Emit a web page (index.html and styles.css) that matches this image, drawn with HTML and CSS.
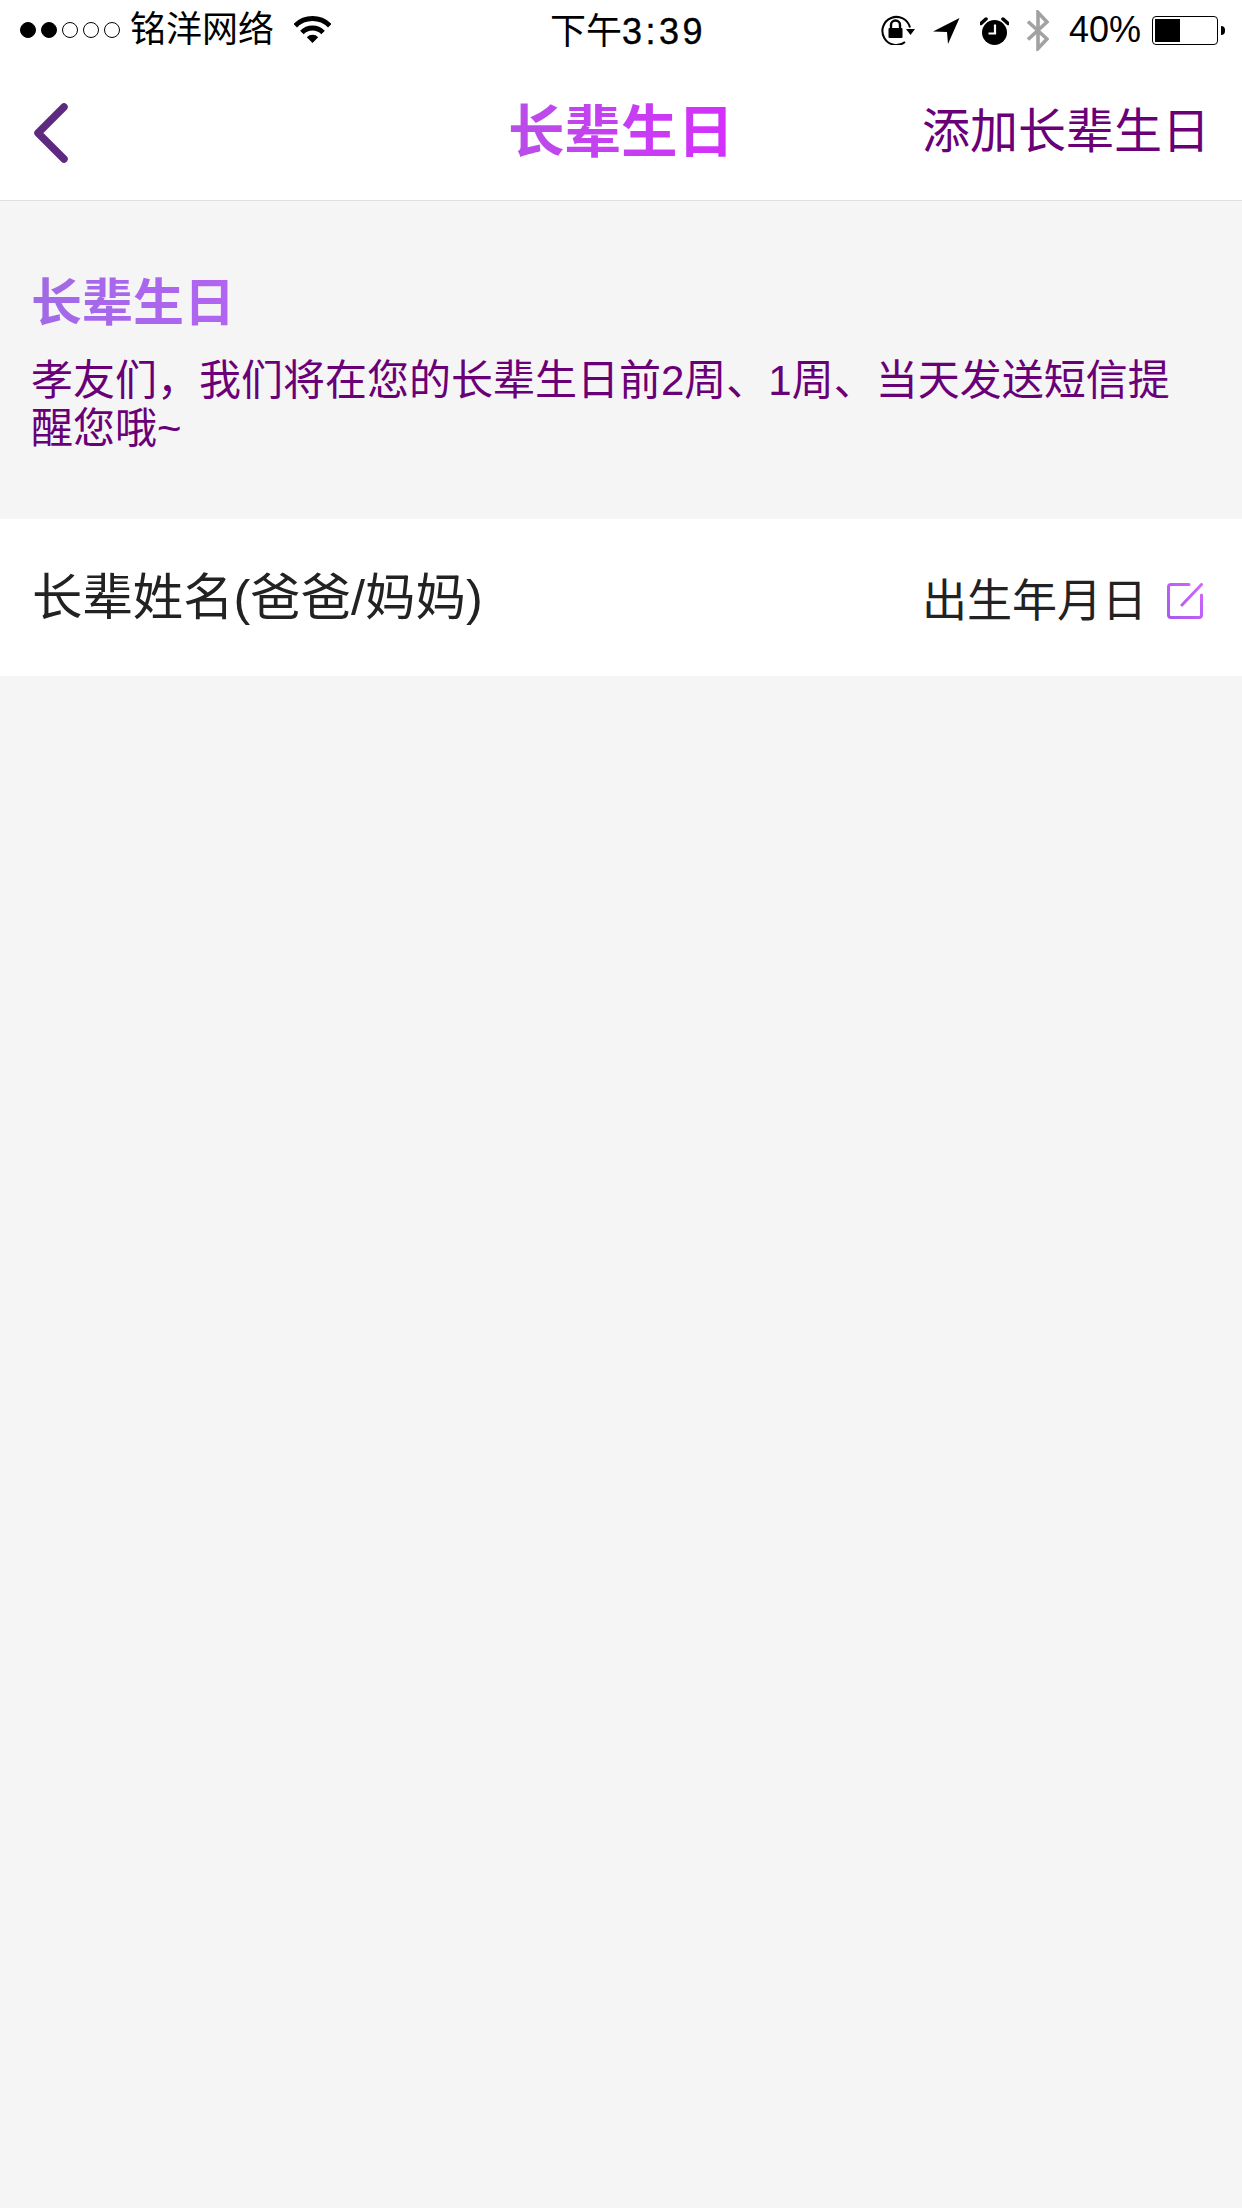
FILE: index.html
```html
<!DOCTYPE html>
<html lang="zh-CN">
<head>
<meta charset="utf-8">
<title>长辈生日</title>
<link rel="stylesheet" href="styles.css">
</head>
<body>
<header class="status">
  <div class="signal"><i class="dot on"></i><i class="dot on"></i><i class="dot"></i><i class="dot"></i><i class="dot"></i></div>
  <span class="carrier">铭洋网络</span>
  <svg class="wifi" width="37" height="27" viewBox="0 0 37 27"><path d="M1.2 9.7A24.5 24.5 0 0 1 35.8 9.7M7.9 16.4A15 15 0 0 1 29.1 16.4" fill="none" stroke="#000" stroke-width="5"/><path d="M18.5 27L12.8 21.2A8 8 0 0 1 24.2 21.2Z" fill="#000"/></svg>
  <span class="time">下午<b class="digits">3:39</b></span>
  <div class="status-right">
    <svg class="s-lock" width="35" height="30" viewBox="0 0 35 30"><path d="M30 12.5A14 14 0 1 0 25 27" fill="none" stroke="#000" stroke-width="2"/><path d="M26 14H35L30.5 20Z" fill="#000"/><rect x="8.5" y="13" width="14" height="10" rx="1" fill="#000"/><path d="M11 13V10a4.500 4.500 0 0 1 9 0v3" fill="none" stroke="#000" stroke-width="2.400"/></svg>
    <svg class="s-arrow" width="27" height="26" viewBox="0 0 27 26"><path d="M26.500 0L0 13.500L14 14L15 26Z" fill="#000"/></svg>
    <svg class="s-alarm" width="29" height="28" viewBox="0 0 29 28"><circle cx="14.500" cy="15.500" r="12.500" fill="#000"/><path d="M1 6.500L6 2M28 6.500L23 2" stroke="#000" stroke-width="3.500" stroke-linecap="round"/><path d="M15 7.500V16.500H8.500" fill="none" stroke="#fff" stroke-width="2.200"/></svg>
    <svg class="s-bt" width="22" height="41" viewBox="0 0 22 41"><path d="M1 11.500L20 29L11 38.500V2.500L20 12L1 29.500" fill="none" stroke="#a2a2a2" stroke-width="3.600"/></svg>
    <span class="pct">40%</span>
    <div class="battery"><div class="battery-fill"></div></div>
    <div class="nub"></div>
  </div>
</header>
<nav class="nav">
  <svg class="back" width="34" height="60" viewBox="0 0 34 60"><path d="M30 4L4 30L30 56" fill="none" stroke="#5e2a80" stroke-width="7.500" stroke-linecap="round" stroke-linejoin="round"/></svg>
  <h1 class="nav-title">长辈生日</h1>
  <a class="nav-action">添加长辈生日</a>
</nav>
<section class="intro">
  <h2 class="intro-title">长辈生日</h2>
  <p class="intro-text">孝友们，我们将在您的长辈生日前2周、1周、当天发送短信提醒您哦~</p>
</section>
<section class="row">
  <span class="row-name">长辈姓名(爸爸/妈妈)</span>
  <span class="row-date">出生年月日</span>
  <svg class="edit" width="36" height="36" viewBox="0 0 36 36"><defs><linearGradient id="eg" x1="0" y1="1" x2="1" y2="0"><stop offset="0" stop-color="#a95aee"/><stop offset="1" stop-color="#d066ff"/></linearGradient></defs><path d="M22 1.500H4Q1.500 1.500 1.500 4V32Q1.500 34.500 4 34.500H32Q34.500 34.500 34.500 32V12M34.500 1.500L15 22" fill="none" stroke="url(#eg)" stroke-width="3" stroke-linecap="round" stroke-linejoin="round"/></svg>
</section>
</body>
</html>
```
FILE: styles.css
```css
* { box-sizing: border-box; }
html, body { margin: 0; padding: 0; }
body {
  width: 1242px;
  height: 2208px;
  background: #f5f5f5;
  font-family: "Liberation Sans", "Noto Sans CJK SC", sans-serif;
  overflow: hidden;
}
.status {
  height: 60px;
  background: #fff;
  display: flex;
  align-items: center;
  padding-left: 20px;
  color: #000;
  font-size: 36px;
}
.signal { display: flex; gap: 5px; }
.dot {
  display: block;
  width: 16px;
  height: 16px;
  border-radius: 50%;
  border: 1px solid #000;
}
.dot.on { background: #000; }
.carrier { margin-left: 10px; line-height: 60px; white-space: nowrap; flex: none; }
.wifi { margin-left: 20px; margin-top: -1px; }
.time { margin-left: 219px; margin-top: 3px; line-height: 60px; white-space: nowrap; }
.digits { font-weight: 400; letter-spacing: 3.5px; -webkit-text-stroke: 0.4px #000; }
.status-right {
  margin-left: auto;
  display: flex;
  align-items: center;
  padding-right: 17px;
}
.s-lock { margin-right: 18px; }
.s-arrow { margin-right: 20px; margin-top: 2px; }
.s-alarm { margin-right: 18px; margin-top: 1px; }
.s-bt { margin-right: 20px; }
.pct { margin-right: 11px; line-height: 60px; }
.battery {
  width: 66px;
  height: 29px;
  border: 1px solid #000;
  border-radius: 4px;
  padding: 2px;
}
.battery-fill { width: 25px; height: 100%; background: #000; }
.nub {
  width: 4px;
  height: 9px;
  margin-left: 3px;
  background: #000;
  border-radius: 0 5px 5px 0;
}
.nav {
  height: 141px;
  background: #fff;
  border-bottom: 1px solid #e0e0e0;
  display: flex;
  align-items: center;
  padding: 0 32px 0 34px;
}
.back { margin-top: 5px; flex: none; }
.nav-title {
  margin: 6px 0 0 440px;
  font-size: 56.5px;
  font-weight: 700;
  line-height: 70px;
  background: linear-gradient(90deg, #b94ee8, #d42ffc);
  -webkit-background-clip: text;
  background-clip: text;
  color: transparent;
}
.nav-action {
  margin-left: auto;
  margin-top: 4px;
  font-size: 48px;
  line-height: 70px;
  color: #6a0078;
}
.intro { padding: 73px 34px 66px 31px; }
.intro-title {
  margin: 0;
  width: max-content;
  font-size: 51px;
  font-weight: 700;
  line-height: 60px;
  background: linear-gradient(90deg, #a06ae6, #b264f2);
  -webkit-background-clip: text;
  background-clip: text;
  color: transparent;
}
.intro-text {
  margin: 23px 0 0;
  font-size: 42px;
  line-height: 48px;
  color: #6a0078;
}
.row {
  height: 157px;
  background: #fff;
  display: flex;
  align-items: center;
  padding: 0 39px 0 32px;
  color: #222;
}
.row-name { font-size: 50.4px; line-height: 60px; }
.row-date { margin-left: auto; margin-top: 8px; font-size: 45px; line-height: 60px; }
.edit { margin-left: 20px; margin-top: 6px; flex: none; }
```
